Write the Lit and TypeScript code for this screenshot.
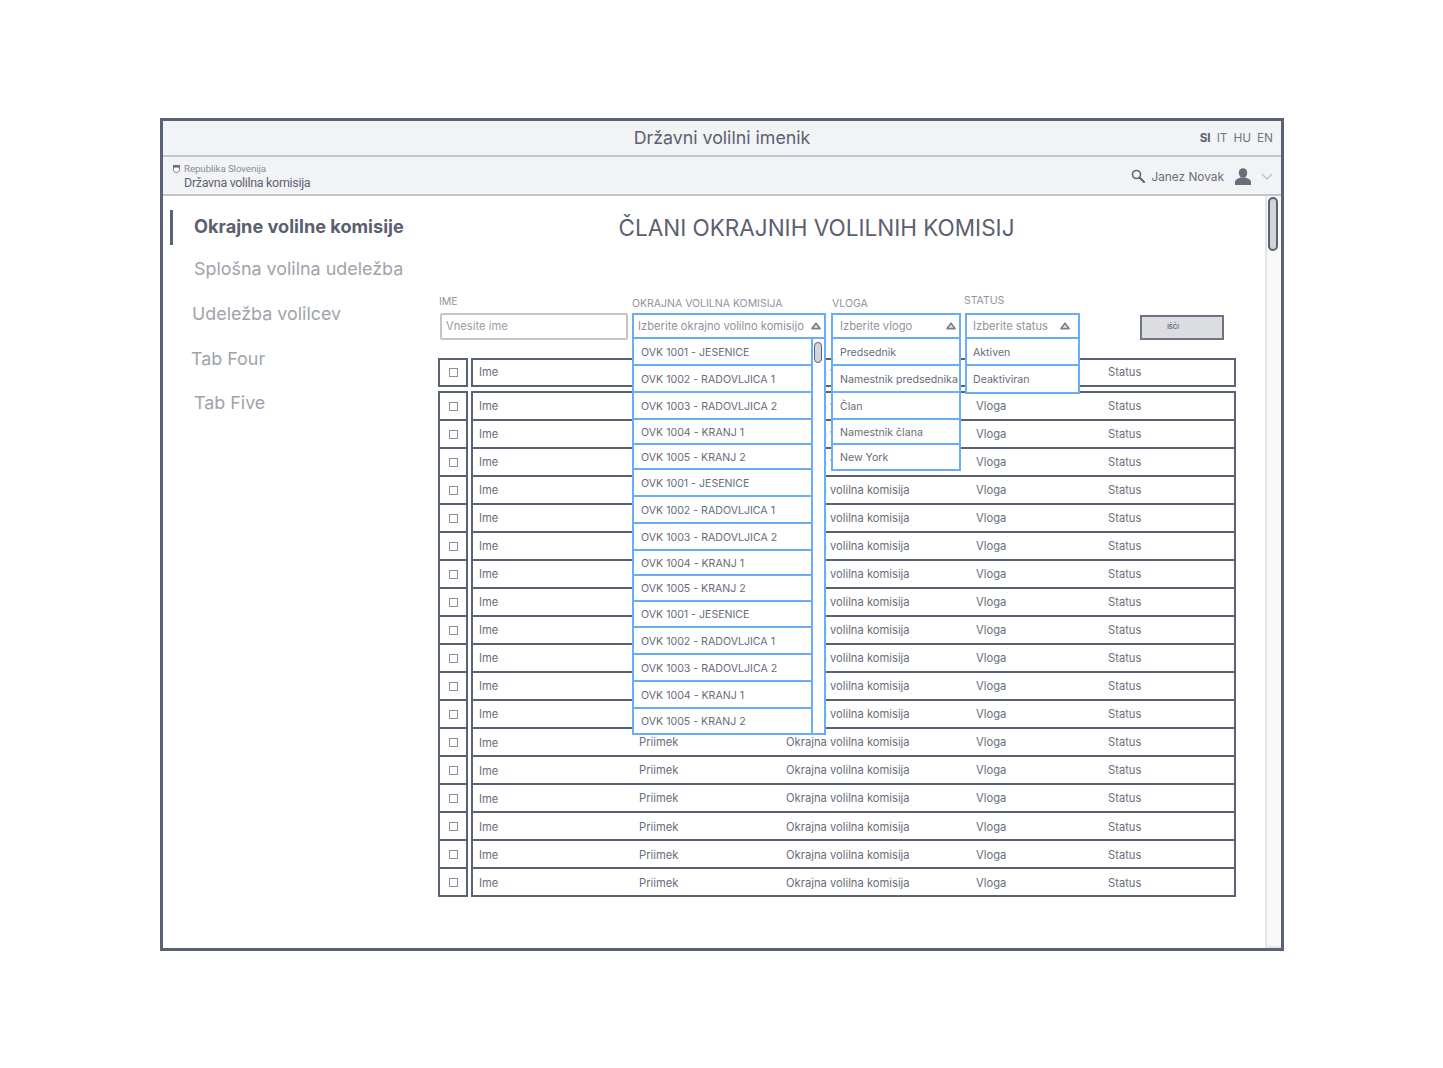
import { LitElement, html, css, svg } from "lit";
import { customElement } from "lit/decorators.js";

const OVK = ["OVK 1001 - JESENICE","OVK 1002 - RADOVLJICA 1","OVK 1003 - RADOVLJICA 2","OVK 1004 - KRANJ 1","OVK 1005 - KRANJ 2"];
const D1: [string, number][] = [27,27,27,25,25,27,27,27,25,26,26,27,27,27,24].map((h, i) => [OVK[i % 5], h]);
const D2: [string, number][] = [["Predsednik",27],["Namestnik predsednika",27],["Član",27],["Namestnik člana",25],["New York",24]];
const D3: [string, number][] = [["Aktiven",27],["Deaktiviran",26]];

const caret = svg`<svg class="caret" width="10" height="8" viewBox="0 0 10 8"><path d="M5 1.2 L9 6.6 H1 Z" fill="#e4e5e8" stroke="#7b7e8a" stroke-width="1.6" stroke-linejoin="round"/></svg>`;

@customElement("app-root")
export class AppRoot extends LitElement {
  static styles = css`
    :host { display: block; width: 1443px; height: 1068px; background: #fff; font-family: Inter, "Liberation Sans", sans-serif; color: #6a6d7a; font-size: 11.2px; box-sizing: border-box; padding: 118px 0 0 160px; }
    * { box-sizing: border-box; }
    .window { width: 1124px; height: 833px; border: 3px solid #5b6275; display: flex; flex-direction: column; background: #fff; }
    .top { height: 36px; flex: none; background: #f2f3f5; border-bottom: 2px solid #c3c5cd; display: grid; grid-template-columns: 1fr auto 1fr; align-items: center; }
    .title { grid-column: 2; font-size: 17.8px; color: #5b6070; margin-bottom: 1px; }
    .langs { grid-column: 3; justify-self: end; display: flex; gap: 6px; padding-right: 8px; font-size: 11.8px; color: #6f7383; margin-bottom: 1px; }
    .langs b { color: #5b6070; }
    .sub { height: 39px; flex: none; background: #f2f3f5; border-bottom: 2px solid #c3c5cd; display: flex; align-items: center; padding: 0 8px 0 10px; }
    .brand { display: flex; gap: 4px; flex: 1; }
    .shield { margin-top: 4px; }
    .brand-text { display: flex; flex-direction: column; font-family: Roboto, "Liberation Sans", sans-serif; margin-top: 1px; }
    .rep { font-size: 9.8px; letter-spacing: -0.12px; color: #8a8d98; line-height: 13px; }
    .dvk { font-size: 12.5px; letter-spacing: -0.32px; color: #5f6370; line-height: 16px; }
    .user { display: flex; align-items: center; font-size: 11.85px; color: #6a6d7a; margin-top: 1px; }
    .user .name { margin: 2px 11px 0 6px; }
    .user .chev { margin-left: 10px; }
    .main { flex: 1; display: flex; min-height: 0; }
    .side { width: 275px; flex: none; padding-top: 14px; font-size: 17.9px; color: #a0a3ab; }
    .nav { display: block; line-height: 24px; }
    .nav.active { margin-left: 7px; border-left: 3px solid #5b6275; padding-left: 21px; height: 35px; line-height: 33px; font-weight: 700; color: #5b6070; font-size: 18.15px; }
    .n2 { margin: 12px 0 0 31px; }
    .n3 { margin: 21px 0 0 29px; }
    .n4 { margin: 21px 0 0 28px; }
    .n5 { margin: 20px 0 0 31px; }
    .content { flex: 1; min-width: 0; }
    h1 { margin: 0; height: 98px; padding: 16px 70px 0 0; text-align: center; font-weight: 400; font-size: 22.5px; line-height: 32px; color: #5b6070; }
    .filters { display: flex; align-items: flex-end; height: 46px; padding-left: 1px; position: relative; z-index: 2; color: #9a9da6; }
    .field { flex: none; position: relative; }
    .label { font-size: 10.5px; line-height: 14px; color: #9194a0; }
    .f1 { width: 189px; } .f1 .label { margin-bottom: 4px; }
    .f2 { width: 194px; margin-left: 4px; margin-bottom: 1px; } .f2 .label { margin-bottom: 2px; }
    .f3 { width: 130px; margin-left: 5px; margin-bottom: 1px; } .f3 .label { margin-bottom: 2px; padding-left: 1px; }
    .f4 { width: 115px; margin-left: 4px; margin-bottom: 1px; } .f4 .label { margin-bottom: 5px; margin-left: -1px; }
    .input { margin-left: 1px; height: 27px; border: 2px solid #c3c5cb; border-radius: 2px; display: flex; align-items: center; padding: 0 0 1px 4px; color: #9a9da6; background: #fff; }
    .select { height: 26px; border: 2px solid #6aadf6; display: flex; align-items: center; justify-content: space-between; padding: 0 3px 0 4px; background: #fff; color: #8f929c; }
    .f3 .select { padding-left: 7px; }
    .f4 .select { padding-left: 6px; padding-right: 8px; }
    .drop { position: absolute; left: 0; right: 0; top: 100%; background: #fff; border: 2px solid #6aadf6; border-top: none; display: flex; }
    .opts { flex: 1; min-width: 0; }
    .opt { display: flex; align-items: center; padding: 1px 0 0 7px; border-bottom: 2px solid #6aadf6; color: #686b79; font-size: 10.6px; white-space: nowrap; overflow: hidden; }
    .f4 .opt { padding-left: 6px; }
    .opt:last-child { border-bottom: none; }
    .dscroll { width: 13px; flex: none; border-left: 2px solid #6aadf6; padding: 3px 1px; }
    .dthumb { width: 8px; height: 21px; background: #d3d5d9; border: 1.5px solid #5b6275; border-radius: 4px; }
    .btn { flex: none; margin-left: 60px; width: 84px; height: 25px; padding: 0 18px 2px 0; background: #dcdde0; border: 2px solid #6f7485; display: flex; align-items: center; justify-content: center; font-size: 6px; font-weight: 600; color: #5b6070; }
    .table { margin-top: 18px; width: 798px; }
    .row { display: flex; gap: 3px; height: 28px; }
    .row.head { height: 29px; margin-bottom: 4px; }
    .row.head .cells { padding-bottom: 1px; }
    .row.head .cb { padding-bottom: 1px; }
    .cb { width: 30px; flex: none; border: 2px solid #5b6275; border-bottom: none; display: flex; align-items: center; justify-content: center; }
    .cb i { display: block; width: 9px; height: 9px; border: 1.5px solid #8d909c; }
    .cells { flex: 1; border: 2px solid #5b6275; border-bottom: none; display: grid; grid-template-columns: 160px 147px 190px 132px 1fr; align-items: center; padding-left: 6px; white-space: nowrap; color: #6a6d7a; }
    .row.head .cb, .row.head .cells, .row:last-child .cb, .row:last-child .cells { border-bottom: 2px solid #5b6275; }
    .row:last-child { height: 30px; }
    .late .cells, .late .cb { padding-top: 1px; }
    .low .cells span:first-child { padding-top: 2px; }
    .sb { width: 16px; flex: none; background: #f9f9fa; border-left: 2px solid #e6e6ea; border-bottom: 2px solid #e6e6ea; padding: 1px; }
    .thumb { width: 10px; height: 54px; background: #d3d5d9; border: 2px solid #5b6275; border-radius: 6px; }
  `;

  drop(items: [string, number][], scroll = false) {
    return html`<div class="drop">
      <div class="opts">${items.map(([t, h]) => html`<div class="opt" style="height:${h}px">${t}</div>`)}</div>
      ${scroll ? html`<div class="dscroll"><div class="dthumb"></div></div>` : ""}
    </div>`;
  }

  row(cls = "") {
    return html`<div class="row ${cls}">
      <div class="cb"><i></i></div>
      <div class="cells"><span>Ime</span><span>Priimek</span><span>Okrajna volilna komisija</span><span>Vloga</span><span>Status</span></div>
    </div>`;
  }

  render() {
    return html`<div class="window">
      <div class="top">
        <div class="title">Državni volilni imenik</div>
        <div class="langs"><b>SI</b><span>IT</span><span>HU</span><span>EN</span></div>
      </div>
      <div class="sub">
        <div class="brand">
          <svg class="shield" width="7" height="8" viewBox="0 0 7 8"><path d="M0.5 0.5 H6.5 V4.5 C6.5 6.3 5 7.3 3.5 7.7 C2 7.3 0.5 6.3 0.5 4.5 Z" fill="#fff" stroke="#6a6d7a" stroke-width="1"/><path d="M0.5 0.5 H6.5 V2.6 H0.5 Z" fill="#6a6d7a"/></svg>
          <div class="brand-text"><span class="rep">Republika Slovenija</span><span class="dvk">Državna volilna komisija</span></div>
        </div>
        <div class="user">
          <svg width="14" height="14" viewBox="0 0 14 14"><circle cx="5.5" cy="5.5" r="4" fill="none" stroke="#5f6370" stroke-width="1.6"/><path d="M8.5 8.5 L13 13" stroke="#5f6370" stroke-width="2" stroke-linecap="round"/></svg>
          <span class="name">Janez Novak</span>
          <svg width="16" height="17" viewBox="0 0 16 17"><ellipse cx="8" cy="5" rx="4.2" ry="4.8" fill="#6a6d78"/><path d="M0 17 V14 C0 11.5 3 10.5 5.5 9.5 H10.5 C13 10.5 16 11.5 16 14 V17 Z" fill="#6a6d78"/></svg>
          <svg class="chev" width="12" height="7" viewBox="0 0 12 7"><path d="M1 1 L6 6 L11 1" fill="none" stroke="#c3c5cb" stroke-width="1.6"/></svg>
        </div>
      </div>
      <div class="main">
        <div class="side">
          <span class="nav active">Okrajne volilne komisije</span>
          <span class="nav n2">Splošna volilna udeležba</span>
          <span class="nav n3">Udeležba volilcev</span>
          <span class="nav n4">Tab Four</span>
          <span class="nav n5">Tab Five</span>
        </div>
        <div class="content">
          <h1>ČLANI OKRAJNIH VOLILNIH KOMISIJ</h1>
          <div class="filters">
            <div class="field f1"><div class="label">IME</div><div class="input">Vnesite ime</div></div>
            <div class="field f2"><div class="label">OKRAJNA VOLILNA KOMISIJA</div><div class="select"><span>Izberite okrajno volilno komisijo</span>${caret}</div>${this.drop(D1, true)}</div>
            <div class="field f3"><div class="label">VLOGA</div><div class="select"><span>Izberite vlogo</span>${caret}</div>${this.drop(D2)}</div>
            <div class="field f4"><div class="label">STATUS</div><div class="select"><span>Izberite status</span>${caret}</div>${this.drop(D3)}</div>
            <div class="btn">IŠČI</div>
          </div>
          <div class="table">
            ${this.row("head")}
            ${Array.from({ length: 18 }, (_, i) => this.row(i >= 15 ? "late" : i >= 12 ? "low" : ""))}
          </div>
        </div>
        <div class="sb"><div class="thumb"></div></div>
      </div>
    </div>`;
  }
}
